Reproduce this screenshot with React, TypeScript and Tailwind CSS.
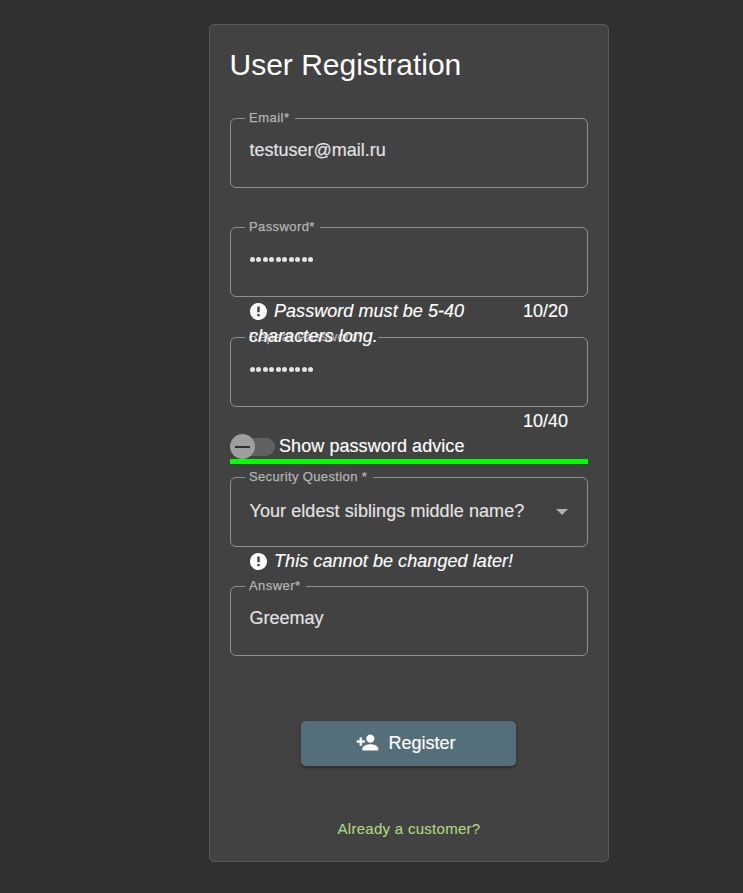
import type { ReactNode } from "react";

type FieldProps = {
  label: string;
  labelClass: string;
  className?: string;
  children: ReactNode;
};

function Field({ label, labelClass, className = "", children }: FieldProps) {
  return (
    <div className={`relative h-[70px] shrink-0 rounded-[6px] border border-[#8e8e8e] px-[19px] text-[18px] leading-[20px] text-[#e3e3e3] ${className}`}>
      <span className={`absolute -top-[9px] left-[14px] h-[16px] bg-[#424242] pl-[4px] text-[13px] leading-[16px] whitespace-nowrap text-[#b3b3b3] [-webkit-text-stroke:0.25px] ${labelClass}`}>
        {label}
      </span>
      {children}
    </div>
  );
}

function Dots() {
  return (
    <div className="mt-[28.500px] flex gap-[1.45px]">
      {Array.from({ length: 10 }, (_, i) => (
        <span key={i} className="size-[5px] rounded-full bg-[#e3e3e3]" />
      ))}
    </div>
  );
}

function Alert() {
  return (
    <svg viewBox="2 2 20 20" className="mr-[7px] ml-px inline-block size-[17px] align-[-3px]" fill="white">
      <path d="M12 2C6.480 2 2 6.480 2 12s4.480 10 10 10 10-4.480 10-10S17.520 2 12 2z" />
      <path fill="#424242" d="M10.600 6h2.800v7h-2.800zM10.600 15h2.800v2.700h-2.800z" />
    </svg>
  );
}

export default function App() {
  return (
    <main className="flex h-[893px] justify-center bg-[#303030] pt-[24px] pl-[75px] font-['Liberation_Sans',Arial,sans-serif] text-white [-webkit-text-stroke:0.15px]">
      <section className="flex h-[838px] w-[400px] flex-col rounded-[5px] border border-[#595959] bg-[#424242] px-[20px]">
        <h1 className="mt-[20px] -ml-[0.500px] h-[40px] text-[30px] leading-[40px] [-webkit-text-stroke:0px]">User Registration</h1>
        <Field label="Email*" labelClass="w-[50px] tracking-[0.5px]" className="mt-[33px]">
          <div className="-ml-[0.500px] pt-[21px]">testuser@mail.ru</div>
        </Field>
        <Field label="Password*" labelClass="w-[75px] tracking-[0.4px]" className="mt-[39px]">
          <Dots />
        </Field>
        <div className="relative z-10 flex h-[40px] shrink-0 justify-between px-[19px] pt-[2px] text-[18px] leading-[25px]">
          <em className="w-[230px] tracking-[0.05px]"><Alert />Password must be 5-40 characters long.</em>
          <span className="pr-[1px]">10/20</span>
        </div>
        <Field label="Repeat Password*" labelClass="w-[133px] tracking-[0.4px]">
          <Dots />
        </Field>
        <div className="mt-[2px] h-[25px] pr-[20px] text-right text-[18px] leading-[25px]">10/40</div>
        <div className="flex h-[25px] items-center text-[18px]">
          <span className="relative flex h-[25px] w-[45px] items-center">
            <span className="ml-[5px] h-[18px] w-[40px] rounded-full bg-[#616161]" />
            <span className="absolute top-0 left-0 flex size-[25px] items-center justify-center rounded-full bg-[#9e9e9e]">
              <span className="h-[2px] w-[15px] bg-[#303030]" />
            </span>
          </span>
          <span className="ml-[4px] tracking-[0.07px]">Show password advice</span>
        </div>
        <div className="h-[5px] bg-[#00ff00]" />
        <Field label="Security Question *" labelClass="w-[128px] tracking-[0.36px]" className="mt-[13px]">
          <div className="flex items-center justify-between pt-[23px]">
            <span className="-ml-[0.500px] tracking-[0.07px]">Your eldest siblings middle name?</span>
            <span className="mt-[2px] mr-[0.500px] border-x-[6.500px] border-t-[6px] border-x-transparent border-t-[#b0b0b0]" />
          </div>
        </Field>
        <div className="h-[39px] px-[19px] pt-[2px] text-[18px] leading-[25px]">
          <em className="tracking-[0.07px]"><Alert />This cannot be changed later!</em>
        </div>
        <Field label="Answer*" labelClass="w-[61px] tracking-[0.45px]">
          <div className="-ml-[0.500px] pt-[21px]">Greemay</div>
        </Field>
        <button className="mt-[65px] ml-[71px] flex h-[45px] w-[215px] items-center justify-center rounded-[5px] bg-[#546e7a] pr-[5px] text-[18px] shadow-[0_2px_3px_rgba(0,0,0,.35)]">
          <svg viewBox="0 0 24 24" className="-mt-[2px] mr-[9px] size-[23px]" fill="currentColor" stroke="currentColor" strokeWidth="0.5">
            <path d="M15 12c2.210 0 4-1.790 4-4s-1.790-4-4-4-4 1.790-4 4 1.790 4 4 4zm-9-2V7H4v3H1v2h3v3h2v-3h3v-2H6zm9 4c-2.670 0-8 1.340-8 4v2h16v-2c0-2.660-5.330-4-8-4z" />
          </svg>
          Register
        </button>
        <a className="mt-[53px] text-center text-[15px] leading-[20px] tracking-[0.28px] text-[#aed581]">Already a customer?</a>
      </section>
    </main>
  );
}
